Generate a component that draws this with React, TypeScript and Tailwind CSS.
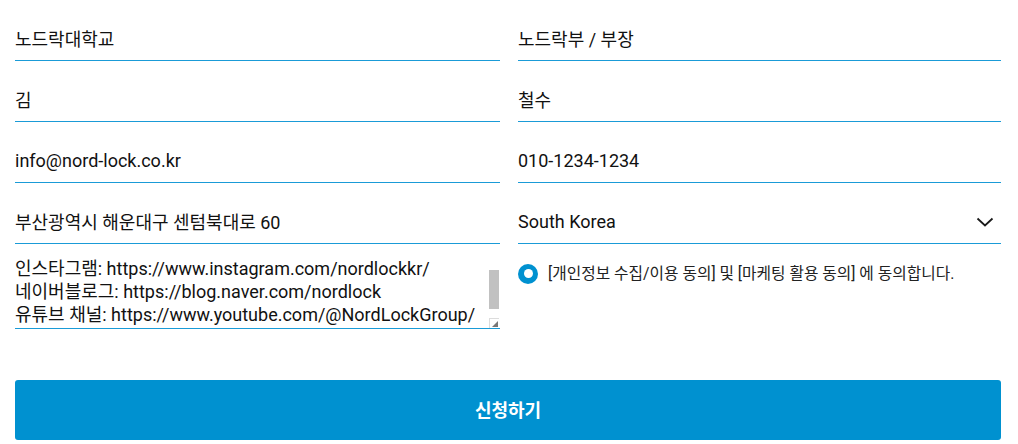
const font = "font-['Roboto','Noto_Sans_CJK_KR',sans-serif]";

function Field({ value }: { value: string }) {
  return (
    <input
      readOnly
      value={value}
      className="h-[45px] w-full border-b border-[#1a9bd7] bg-transparent text-[18px] text-[#111] outline-none"
    />
  );
}

export default function App() {
  const links = [
    '인스타그램: https://www.instagram.com/nordlockkr/',
    '네이버블로그: https://blog.naver.com/nordlock',
    '유튜브 채널: https://www.youtube.com/@NordLockGroup/',
  ].join('\n');

  return (
    <div className={`${font} w-[1018px] bg-white pl-[15px] pr-[17px] pt-[16px]`}>
      <div className="grid grid-cols-[485px_483px] gap-x-[18px] gap-y-[16px]">
        <Field value="노드락대학교" />
        <Field value="노드락부 / 부장" />
        <Field value="김" />
        <Field value="철수" />
        <Field value="info@nord-lock.co.kr" />
        <Field value="010-1234-1234" />
        <Field value="부산광역시 해운대구 센텀북대로 60" />
        <div className="flex h-[45px] items-center justify-between border-b border-[#1a9bd7] text-[18px] text-[#111]">
          <span>South Korea</span>
          <svg width="18" height="10" viewBox="0 0 18 10" className="mr-[7px] mt-[1px]" fill="none">
            <path d="M1.5 1.5 L9 8.5 L16.5 1.5" stroke="#1a1a1a" strokeWidth="1.8" />
          </svg>
        </div>
      </div>
      <div className="grid grid-cols-[485px_483px] gap-x-[18px]">
        <div className="relative h-[85px]">
          <textarea
            readOnly
            value={links}
            className="h-[85px] w-full resize-none overflow-hidden whitespace-pre border-b border-[#1a9bd7] bg-transparent pt-[13px] text-[18px] leading-[23px] text-[#111] outline-none"
          />
          {/* scrollbar thumb + resizer drawn over the textarea */}
          <div className="absolute right-[1px] top-[26px] h-[39px] w-[10px] bg-[#c1c1c1]" />
          <div className="absolute bottom-[1px] right-[1px] flex h-[10px] w-[10px] items-center justify-center border-l border-t border-[#dcdcdc] bg-white">
            <svg width="6" height="6" viewBox="0 0 6 6">
              <path d="M6 0 L6 6 L0 6 Z" fill="#777" />
            </svg>
          </div>
        </div>
        <div className="flex items-start pt-[18px]">
          <label className="flex items-center gap-[10px] text-[15.75px] text-[#222]">
            <span className="flex h-[20px] w-[20px] items-center justify-center rounded-full bg-[#0091d0]">
              <span className="h-[9px] w-[9px] rounded-full bg-white" />
            </span>
            [개인정보 수집/이용 동의] 및 [마케팅 활용 동의] 에 동의합니다.
          </label>
        </div>
      </div>
      <button className="mt-[51px] flex h-[60px] w-[986px] items-center justify-center rounded-[3px] bg-[#0091d0] text-[18px] font-bold text-white">
        신청하기
      </button>
      <div className="h-[4px]" />
    </div>
  );
}
